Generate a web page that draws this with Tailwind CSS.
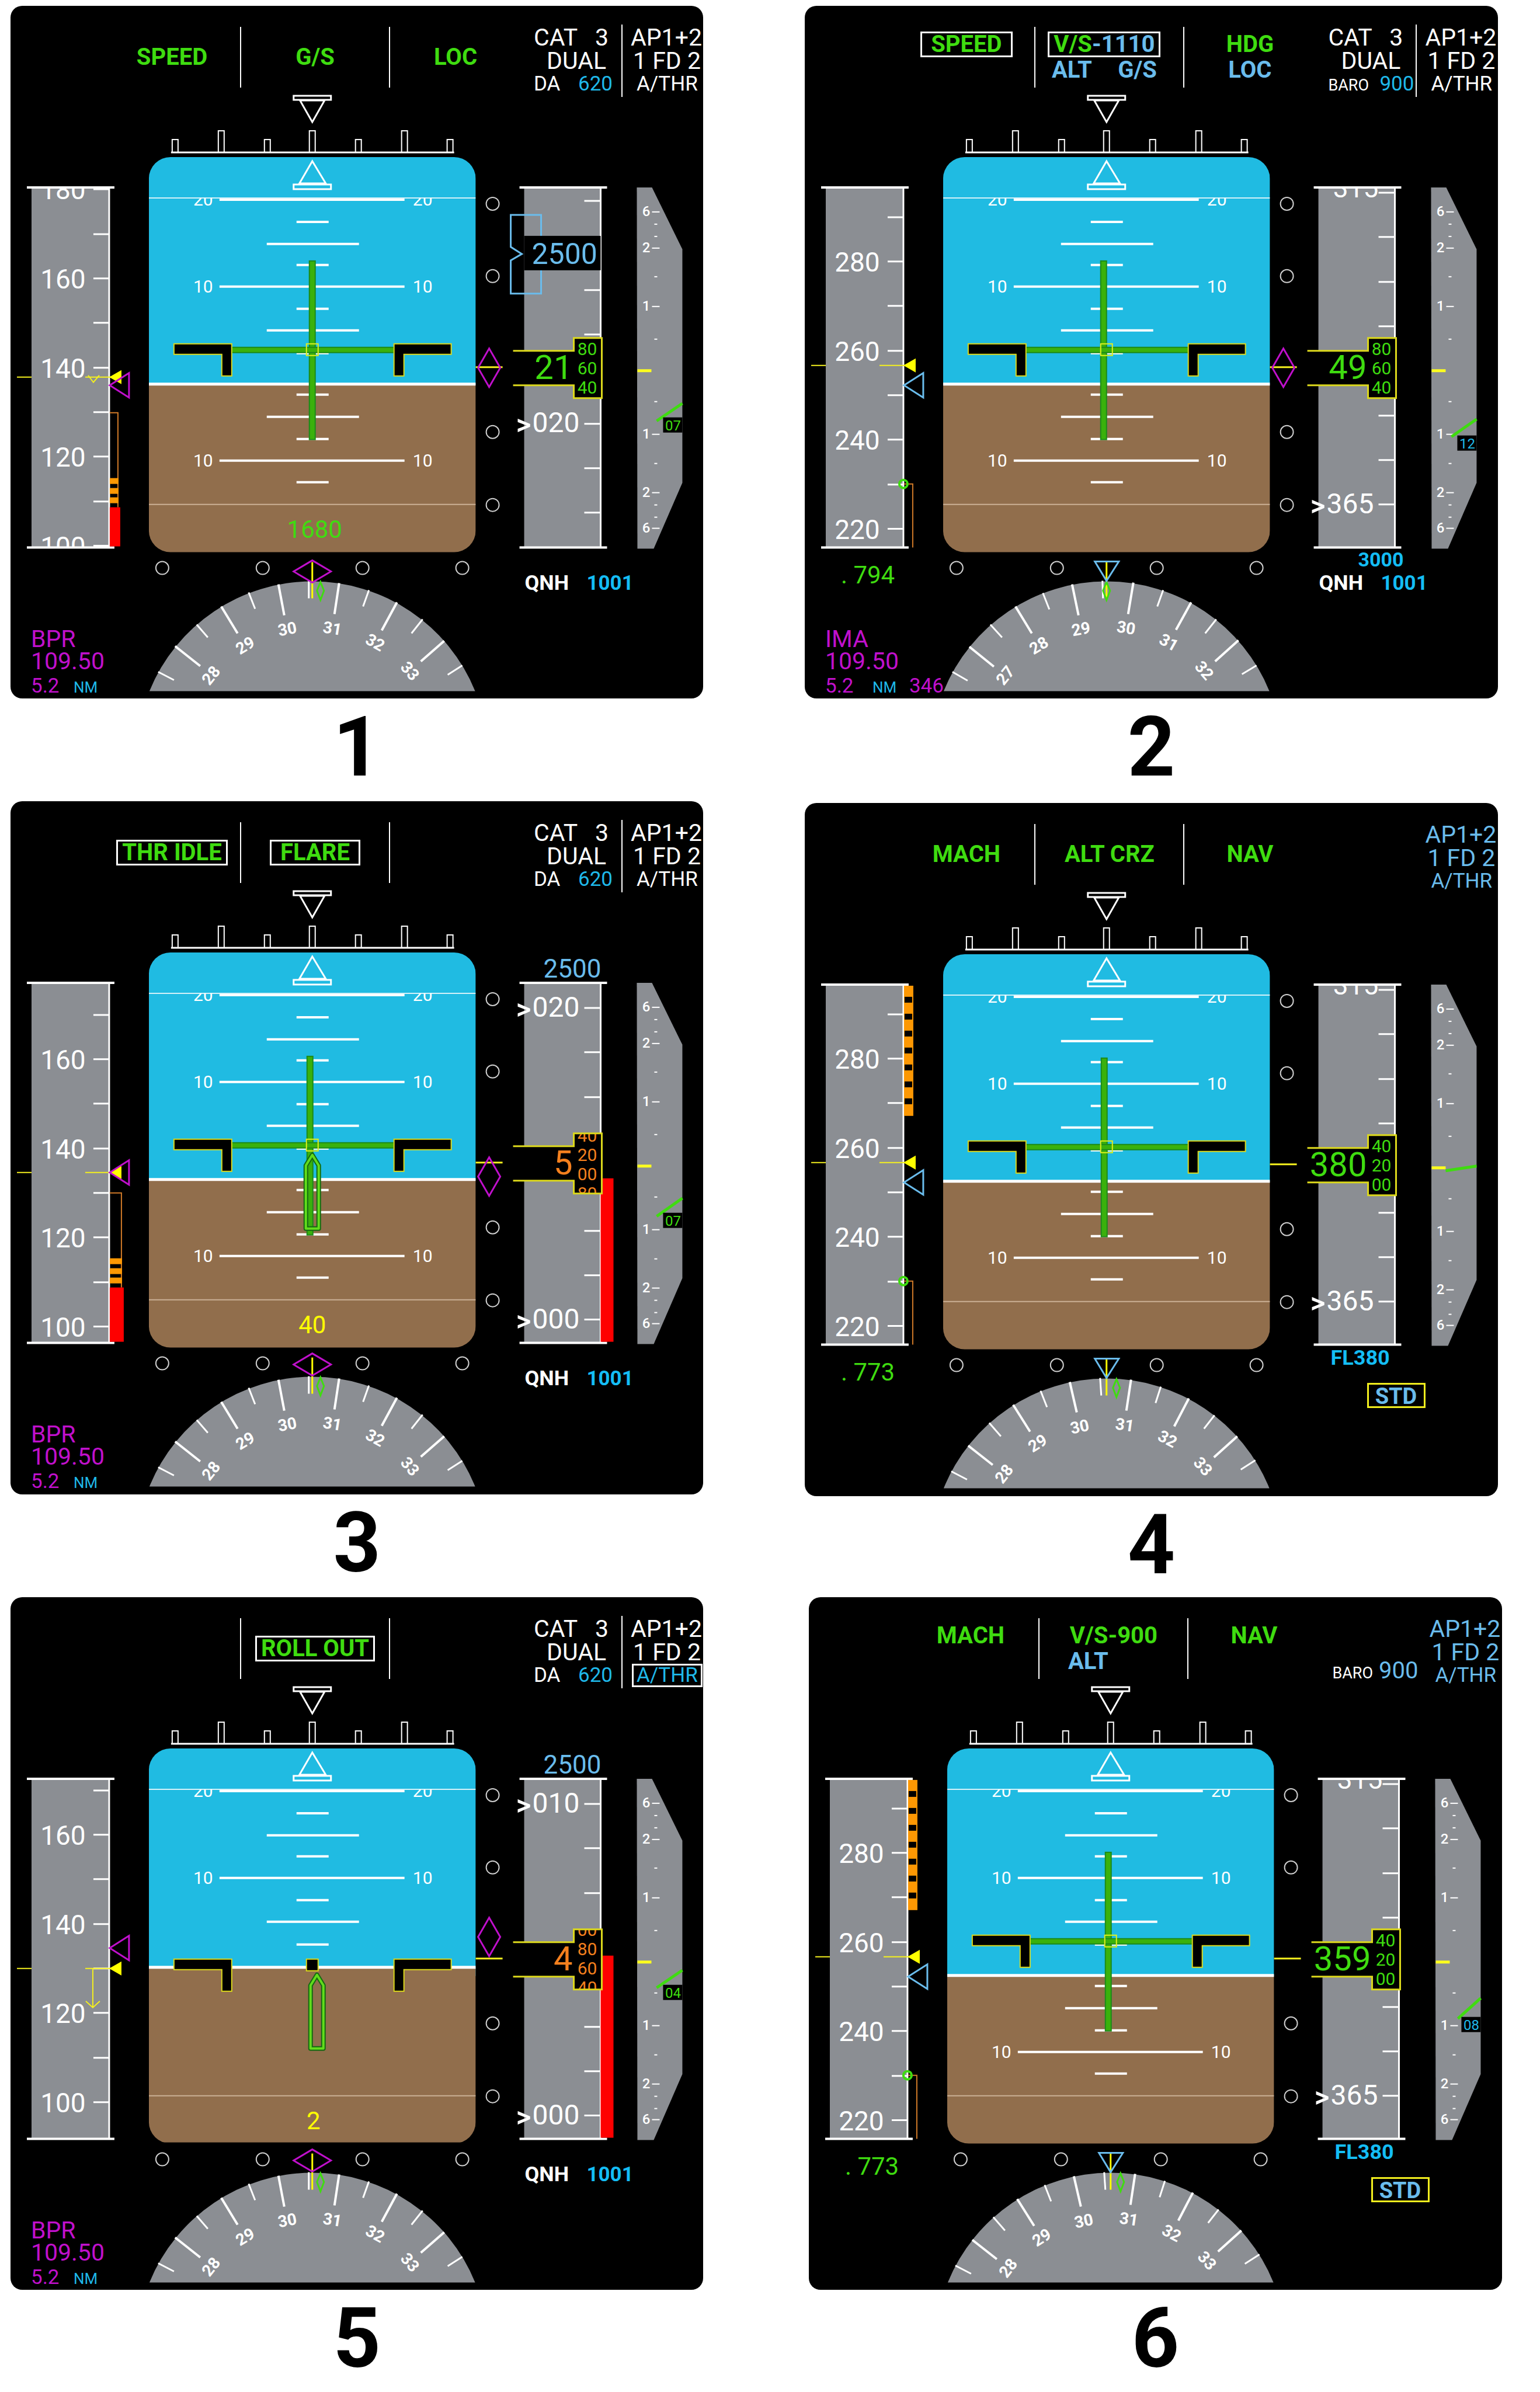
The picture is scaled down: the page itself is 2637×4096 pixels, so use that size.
<!DOCTYPE html>
<html lang="en">
<head>
<meta charset="utf-8">
<title>Primary flight display modes</title>
<script src="https://cdn.jsdelivr.net/npm/@tailwindcss/browser@4"></script>
</head>
<body class="bg-white font-['Roboto',sans-serif] text-black">
<main id="sheet" class="flex flex-col pt-[10px] pl-[18px]"></main>

<script>
// Text colours used by the flight mode annunciator and the readouts
const T = {
  green: 'text-[#3fdc10]', blue: 'text-[#6abcec]', cyan: 'text-[#1fb9ea]', white: 'text-white'
};
const F = {
  green: 'fill-[#3fdc10]', blue: 'fill-[#6abcec]', cyan: 'fill-[#14bdf5]', white: 'fill-white',
  magenta: 'fill-[#c010cc]', orange: 'fill-[#f5801e]', yellow: 'fill-[#ffff00]', sky: 'fill-[#1fb9ea]'
};
const S = {
  magenta: 'fill-none stroke-[#c010cc] stroke-3', blue: 'fill-none stroke-[#6abcec] stroke-3',
  yellow: 'fill-none stroke-[#f4f01e] stroke-2', white: 'fill-none stroke-white stroke-3'
};

const line = (x1, y1, x2, y2, cls) => `<line x1="${x1}" y1="${y1}" x2="${x2}" y2="${y2}" class="${cls}"/>`;
const rect = (x, y, w, h, cls, rx = 0) => `<rect x="${x}" y="${y}" width="${w}" height="${h}" rx="${rx}" class="${cls}"/>`;
const poly = (pts, cls) => `<polygon points="${pts}" class="${cls}"/>`;
const path = (d, cls) => `<path d="${d}" class="${cls}"/>`;
const text = (x, y, s, cls, anchor = 'start') => `<text x="${x}" y="${y}" text-anchor="${anchor}" class="${cls}">${s}</text>`;
const ring = (x, y) => `<circle cx="${x}" cy="${y}" r="11" class="fill-none stroke-[#cfcfcf] stroke-2"/>`;

/* ---------- flight mode annunciator ---------- */
const BOX = { wide: 'outline-3 -outline-offset-3 outline-white px-[18px]', tight: 'outline-3 -outline-offset-3 outline-white px-[10px]' };
const word = ([s, c]) => `<span class="${T[c]}">${s}</span>`;
const modeCell = (rows = [], cls) => `
  <div class="flex h-[104px] flex-col justify-center text-[40px] leading-[44px] font-bold whitespace-pre ${cls}">
    ${rows.map(r => `<div class="flex ${r.spread ? 'w-[180px] justify-between' : ''} ${r.box ? BOX[r.box] : ''}">${r.w.map(word).join('') || '&nbsp;'}</div>`).join('')}
  </div>`;
const header = p => `
  <header class="grid h-[150px] grid-cols-[393px_257px_224px_172px_1fr]">
    ${modeCell(p.fma[0], 'mt-[36px] ml-[160px] items-center')}
    ${modeCell(p.fma[1], 'mt-[36px] border-x-2 border-white items-center' + (p.left ? ' [&>div:last-child]:w-[156px]' : '') + (p.armed ? ' pr-[18px]' : ''))}
    ${modeCell(p.fma[2], 'mt-[36px] items-center')}
    <div class="flex flex-col pt-[34px] pl-[22px] leading-[40px] text-white">
      ${p.cat ? `
      <div class="flex w-[128px] justify-between text-[41px]"><span>CAT</span><span>3</span></div>
      <div class="w-[124px] text-right text-[41px]">DUAL</div>` : '<div class="h-[72px]"></div>'}
      <div class="flex items-baseline justify-between whitespace-nowrap ${p.min[3]}"><span class="${p.min[2]}">${p.min[0]}</span>${p.cat ? `<span class="text-[35px] ${T.cyan}">${p.min[1]}</span>` : `<span class="text-[40px] ${T.blue}">${p.min[1]}</span>`}</div>
    </div>
    <div class="mt-8 h-[124px] pt-[2px] pl-[14px] text-[41px] leading-[40px] whitespace-nowrap ${p.cat ? 'border-l-2 border-white text-white' : 'border-l-2 border-transparent text-[#6abcec]'}">
      <div>AP1+2</div>
      <div class="pl-1">1 FD 2</div>
      <div class="pl-[10px] text-[35px]"><span class="${p.athr ? 'inline-block h-[40px] px-2 -ml-2 leading-[40px] outline-3 -outline-offset-3 outline-white ' + T.cyan : ''}">A/THR</span></div>
    </div>
  </header>`;

/* ---------- attitude indicator ---------- */
const hold = 'fill-black stroke-white stroke-2';
const frame = () => {
  let o = rect(485, 154, 64, 7, S.white) + poly('496,162 538,162 517,199', S.white);
  [282, 440, 596, 753].forEach(x => o += rect(x - 5, 229, 10, 22, hold));
  [361, 517, 675].forEach(x => o += rect(x - 5, 214, 10, 37, hold));
  return o + line(275, 251, 760, 251, 'stroke-white stroke-3');
};
const attitude = (p, id) => {
  const hz = p.horizon || 648;
  let o = `<clipPath id="ball${id}"><rect x="237" y="259" width="560" height="677" rx="37"/></clipPath>
    <clipPath id="pitch${id}"><rect x="237" y="329" width="560" height="525"/></clipPath><g clip-path="url(#ball${id})">`;
  o += rect(237, 259, 560, 390, 'fill-[#20bbe2]') + rect(237, hz, 560, 300, 'fill-[#916e4c]');
  o += line(237, hz, 797, hz, 'stroke-white stroke-5');
  o += line(237, 329, 797, 329, 'stroke-white/80 stroke-2') + line(237, 854, 797, 854, 'stroke-[#cbb095] stroke-2') + '</g>';
  o += poly('517,266 495,304 540,304', S.white) + rect(485, 306, 64, 8, S.white);
  const w = 'stroke-white stroke-4', num = 'fill-white text-[30px]';
  const small = [370, 444, 519, 595], mid = [408, 556], wide = [332, 481];
  if (!p.horizon) { small.push(666, 742, 816); mid.push(704); wide.push(779); }
  o += `<g clip-path="url(#pitch${id})">`;
  small.forEach(y => o += line(490, y, 545, y, w));
  mid.forEach(y => o += line(439, y, 597, y, w));
  wide.forEach(y => {
    const n = y === 332 ? 20 : 10;
    o += line(358, y, 675, y, w) + text(330, y + 10, n, num, 'middle') + text(706, y + 10, n, num, 'middle');
  });
  o += '</g>';
  const d = p.horizon ? 41 : 0;
  if (p.fd) {
    const bar = 'fill-[#3ab10c] stroke-[#1c8a1a] stroke-2';
    o += rect(p.fd - 5, 437, 10, 306, bar) + rect(379, 585, 278, 9, bar);
  }
  const wing = 'fill-black stroke-[#dbd81c] stroke-2';
  o += poly(`280,${579 + d} 379,${579 + d} 379,${634 + d} 362,${634 + d} 362,${597 + d} 280,${597 + d}`, wing);
  o += poly(`657,${579 + d} 755,${579 + d} 755,${597 + d} 674,${597 + d} 674,${634 + d} 657,${634 + d}`, wing);
  o += rect(507, 579 + d, 20, 20, d ? wing : 'fill-none stroke-[#e0f01c] stroke-2');
  if (p.yaw) {
    const [x, y] = p.yaw;
    const d1 = `M${x} ${y + 5} l11 18 v108 h-22 v-108 z`;
    o += path(d1, 'fill-none stroke-[#146a10] stroke-8 [stroke-linejoin:round]') + path(d1, 'fill-none stroke-[#62dc1c] stroke-4 [stroke-linejoin:round]');
  }
  if (p.ra) o += text(p.ra[2] || 519, 911, p.ra[0], 'text-[42px] ' + F[p.ra[1]], 'middle');
  [339, 463, 730, 855].forEach(y => o += ring(826, y));
  [260, 432, 603, 774].forEach(x => o += ring(x, 963));
  o += line(797, 619, 843, 619, 'stroke-[#f4f01e] stroke-3');
  if (p.gs) o += poly(`820,${p.gs - 33} 839,${p.gs} 820,${p.gs + 33} 801,${p.gs}`, S.magenta);
  return o;
};

/* ---------- speed tape ---------- */
const speed = (p, id) => {
  const s = p.spd;
  let o = `<clipPath id="spd${id}"><rect x="28" y="312" width="145" height="615"/></clipPath>`;
  o += rect(36, 312, 132, 615, 'fill-[#8b8e93]') + `<g clip-path="url(#spd${id})">`;
  for (let i = -2; i < 9; i++) {
    const y = Math.round(s.y + i * 76.3);
    if (y < 312 || y > 927) continue;
    o += line(142, y, 169, y, 'stroke-white stroke-3');
    if (i % 2 === 0) o += text(90, y + 17, s.top - i * 10, 'fill-white text-[46px]', 'middle');
  }
  o += '</g>' + line(169, 312, 169, 927, 'stroke-white stroke-3');
  o += line(28, 311, 178, 311, 'stroke-white stroke-4') + line(28, 928, 178, 928, 'stroke-white stroke-4');
  const amber = 'fill-none stroke-[#d07a28] stroke-2', blk = 'fill-[#fd9803]';
  if (s.vls) {
    const v = s.vls, r = s.stripe;
    o += path(`M170 ${v} H${r - 1} V${v + 162}`, amber);
    [112, 129, 145].forEach(k => o += rect(170, v + k, r - 170, 10, blk));
    o += rect(170, v + 162, r - 167, 926 - v - 162, 'fill-[#fe0000]');
  }
  if (s.barber) {
    o += rect(170, 313, 16, 223, blk);
    for (let i = 0; i < 7; i++) o += rect(171, 332 + i * 29, 13, 10, 'fill-black');
  }
  if (s.dot) {
    o += path('M170 819 H185 V928', amber) + '<circle cx="169" cy="819" r="7" class="fill-none stroke-[#3fdc10] stroke-4"/>';
  }
  const a = s.now;
  o += line(11, a, 36, a, S.yellow) + line(128, a, 172, a, S.yellow) + poly(`169,${a} 190,${a - 12} 190,${a + 12}`, 'fill-[#ffff00]');
  if (s.trend === 'short') o += path(`M133 ${a - 3} L142 ${a + 9} L152 ${a - 3}`, S.yellow);
  if (s.trend === 'long') o += path(`M141 ${a} V${a + 66} M129 ${a + 56} L141 ${a + 67} L153 ${a + 56}`, S.yellow);
  o += poly(`170,${s.tgt} 203,${s.tgt - 21} 203,${s.tgt + 21}`, S[s.tgtc]);
  if (p.mach) o += text(62, 989, '. ' + p.mach, 'text-[42px] ' + F.green);
  return o;
};

/* ---------- altitude tape ---------- */
const altitude = (p, id) => {
  const a = p.alt, y6 = 'fill-none stroke-[#dcd81c] stroke-3';
  let o = `<clipPath id="alt${id}"><rect x="860" y="313" width="160" height="613"/></clipPath>
    <clipPath id="drum${id}"><rect x="965" y="569" width="47" height="103"/></clipPath>`;
  o += rect(880, 312, 130, 615, 'fill-[#8b8e93]') + `<g clip-path="url(#alt${id})">`;
  for (let i = 0; i < 8; i++) {
    const y = Math.round(a.y + i * 76.3);
    o += line(983, y, 1010, y, 'stroke-white stroke-3');
  }
  a.labels.forEach(([s, y]) => o += text(894, y + 15, s, 'fill-white text-[48px]') + text(866, y + 19, '&gt;', 'fill-white font-medium text-[50px]'));
  if (a.cut) o += text(944, 328, a.cut, 'fill-white text-[46px]', 'middle');
  o += '</g>' + line(1011, 312, 1011, 927, 'stroke-white stroke-3');
  o += line(872, 311, 1022, 311, 'stroke-white stroke-4') + line(872, 928, 1022, 928, 'stroke-white stroke-4');
  if (a.red) o += rect(1011, a.red, 22, 926 - a.red, 'fill-[#fe0000]');
  if (a.bracket) {
    o += path('M909 358 H857 V413 L876 425 L857 436 V493 H909 Z', S.blue);
    o += rect(880, 394, 131, 59, 'fill-black') + text(893, 442, '2500', 'text-[50px] ' + F.blue);
  }
  if (a.sel) o += text(1012, 302, a.sel, 'text-[44px] ' + F.blue, 'end');
  o += rect(860, 591, 106, 59, 'fill-black') + rect(965, 569, 47, 103, 'fill-black');
  o += text(963, 639, a.big, 'text-[58px] ' + F[a.c], 'end') + `<g clip-path="url(#drum${id})">`;
  a.drum.forEach((s, i) => o += text(988, a.dy + i * 33, s, 'text-[30px] ' + F[a.c], 'middle'));
  o += '</g>' + path('M861 591 H965 V569 H1013 V672 H965 V650 H861', y6);
  if (a.under) o += text(a.under[1], a.under[2], a.under[0], 'font-bold ' + a.under[3] + ' ' + F.cyan);
  if (p.std) o += rect(965, 995, 97, 40, 'fill-none stroke-[#f4f01e] stroke-3') + text(1013, 1029, 'STD', 'font-bold text-[38px] ' + F.blue, 'middle');
  else o += text(881, 1000, 'QNH', 'fill-white font-bold text-[36px]') + text(987, 1000, '1001', 'font-bold text-[35px] ' + F.cyan);
  return o;
};

/* ---------- vertical speed scale ---------- */
const vspeed = p => {
  let o = poly('1073,311 1099,311 1151,417 1151,817 1102,930 1074,930', 'fill-[#8b8e93]');
  [[353, 6], [415, 2], [515, 1], [734, 1], [834, 2], [895, 6]].forEach(([y, n]) =>
    o += line(1099, y, 1112, y, 'stroke-white stroke-2') + text(1089, y + 7, n, 'fill-white font-medium text-[24px]', 'middle'));
  [374, 395, 464, 571, 678, 784, 855, 876].forEach(y => o += line(1103, y, 1108, y, 'stroke-white stroke-2'));
  o += line(1074, 625, 1098, 625, 'stroke-[#ffff1e] stroke-5');
  const [x1, y1, y2] = p.vs.needle;
  o += line(x1, y1, 1151, y2, 'stroke-[#3fdc10] stroke-5');
  if (p.vs.n) o += rect(1118, p.vs.y, 33, 26, 'fill-black') + text(1135, p.vs.y + 22, p.vs.n, 'text-[24px] ' + F[p.vs.c], 'middle');
  return o;
};

/* ---------- heading arc ---------- */
const heading = p => {
  let o = path('M238 1174 A301 301 0 0 1 796 1174 Z', 'fill-[#8b8e93]');
  const cx = 517, cy = 1286, R = 301;
  const at = (deg, r) => {
    const t = deg * Math.PI / 180;
    return [Math.round(cx + r * Math.sin(t)), Math.round(cy - r * Math.cos(t))];
  };
  const [first, a0] = p.hdg;
  for (let i = -5; i <= 7; i++) {
    const deg = a0 + i * 10, big = i % 2 === 0;
    if (Math.abs(deg) > 63) continue;
    const [x1, y1] = at(deg, R), [x2, y2] = at(deg, big ? 247 : 271);
    o += line(x1, y1, x2, y2, big ? 'stroke-white stroke-4' : 'stroke-white stroke-3');
    if (big) {
      const [tx, ty] = at(deg, 213);
      o += `<text x="${tx}" y="${ty}" text-anchor="middle" transform="rotate(${Math.round(deg)} ${tx} ${ty})" class="fill-white font-bold text-[28px]">${first + i / 2}</text>`;
    }
  }
  o += line(517, 953, 517, 1015, 'stroke-[#ffff00] stroke-3');
  o += poly(`${p.trk},987 ${p.trk + 6},1002 ${p.trk},1018 ${p.trk - 6},1002`, 'fill-none stroke-[#3fdc10] stroke-3');
  if (p.loc) o += poly(`485,${p.loc} 517,${p.loc - 19} 549,${p.loc} 517,${p.loc + 19}`, S.magenta);
  else o += poly('497,952 538,952 517,985', S.blue);
  if (p.ils) {
    o += text(35, 1098, p.ils, 'text-[41px] ' + F.magenta) + text(35, 1137, '109.50', 'text-[41px] ' + F.magenta);
    o += text(35, 1177, '5.2', 'text-[35px] ' + F.magenta) + text(p.crs ? 116 : 108, 1177, 'NM', 'text-[26px] ' + F.sky);
    if (p.crs) o += text(179, 1177, p.crs, 'text-[35px] ' + F.magenta);
  }
  return o;
};

const G = s => [s, 'green'], B = s => [s, 'blue'];
const DA = ['DA', '620', 'text-[35px]', 'w-[135px]'];
const cruiseSpd = extra => Object.assign({ y: 438, top: 280, now: 616, tgt: 650, tgtc: 'blue', dot: true }, extra);
const panels = [
  { fma: [[{ w: [G('SPEED')] }], [{ w: [G('G/S')] }], [{ w: [G('LOC')] }]], cat: true, min: DA,
    fd: 517, ra: ['1680', 'green', 521], gs: 620,
    spd: { y: 467, top: 160, now: 636, tgt: 650, tgtc: 'magenta', vls: 697, stripe: 185, trend: 'short' },
    alt: { y: 334, labels: [['020', 715]], bracket: true, big: '21', c: 'green', drum: ['80', '60', '40'], dy: 598 },
    vs: { needle: [1107, 711, 681], n: '07', y: 705, c: 'green' }, hdg: [30, -11.2], trk: 531, loc: 969, ils: 'BPR' },
  { fma: [[{ w: [G('SPEED')], box: 'wide' }, { w: [] }], [{ w: [G('V/S'), B('-1110')], box: 'tight' }, { w: [B('ALT'), B('G/S')], spread: true }], [{ w: [G('HDG')] }, { w: [B('LOC')] }]],
    cat: true, armed: true, min: ['BARO', '900', 'text-[27px]', 'w-[147px]'],
    fd: 512, gs: 620, spd: cruiseSpd(), mach: '794',
    alt: { y: 320, labels: [['365', 854]], cut: '315', big: '49', c: 'green', drum: ['80', '60', '40'], dy: 598, under: ['3000', 948, 960, 'text-[34px]'] },
    vs: { needle: [1108, 738, 708], n: '12', y: 736, c: 'sky' }, hdg: [29, -11.3], trk: 517, ils: 'IMA', crs: '346' },
  { fma: [[{ w: [G('THR IDLE')], box: 'tight' }], [{ w: [G('FLARE')], box: 'wide' }], []], cat: true, min: DA,
    fd: 513, yaw: [517, 601], ra: ['40', 'yellow', 517], gs: 643,
    spd: { y: 442, top: 160, now: 636, tgt: 636, tgtc: 'magenta', vls: 671, stripe: 191 },
    alt: { y: 354, labels: [['020', 354], ['000', 888]], sel: '2500', red: 646, big: '5', c: 'orange', drum: ['40', '20', '00', '80'], dy: 583 },
    vs: { needle: [1107, 711, 680], n: '07', y: 705, c: 'green' }, hdg: [30, -11.2], trk: 531, loc: 965, ils: 'BPR' },
  { fma: [[{ w: [G('MACH')] }], [{ w: [G('ALT CRZ')] }], [{ w: [G('NAV')] }]], drop: true, min: ['', '', '', ''],
    fd: 513, spd: cruiseSpd({ barber: true }), mach: '773',
    alt: { y: 320, labels: [['365', 854]], cut: '315', big: '380', c: 'green', drum: ['40', '20', '00'], dy: 598, under: ['FL380', 901, 962, 'text-[36px]'] }, std: true,
    vs: { needle: [1098, 630, 622] }, hdg: [30, -12], trk: 534 },
  { fma: [[], [{ w: [G('ROLL OUT')], box: 'tight' }], []], cat: true, min: DA, athr: true,
    horizon: 634, yaw: [525, 642], ra: ['2', 'yellow', 519], gs: 582,
    spd: { y: 407, top: 160, now: 636, tgt: 601, tgtc: 'magenta', trend: 'long' },
    alt: { y: 354, labels: [['010', 354], ['000', 888]], sel: '2500', red: 614, big: '4', c: 'orange', drum: ['00', '80', '60', '40'], dy: 580 },
    vs: { needle: [1107, 669, 639], n: '04', y: 664, c: 'green' }, hdg: [30, -11.2], trk: 531, loc: 965, ils: 'BPR' },
  { fma: [[{ w: [G('MACH')] }, { w: [] }], [{ w: [G('V/S-900')] }, { w: [B('ALT')] }], [{ w: [G('NAV')] }, { w: [] }]], left: true,
    min: ['BARO', '900', 'text-[27px]', 'w-[147px]'],
    fd: 513, spd: cruiseSpd({ barber: true }), mach: '773',
    alt: { y: 320, labels: [['365', 854]], cut: '315', big: '359', c: 'green', drum: ['40', '20', '00'], dy: 598, under: ['FL380', 901, 962, 'text-[36px]'] }, std: true,
    vs: { needle: [1112, 722, 687], n: '08', y: 719, c: 'sky' }, hdg: [30, -12], trk: 534 }
];

const figure = (p, i) => `
  <figure class="w-[45.3%] ${p.drop ? 'pt-[3px]' : ''}">
    <div class="rounded-[20px] bg-black">
      ${header(p)}
      <svg viewBox="0 150 1187 1037" class="block w-full" role="img" aria-label="Flight display ${i + 1}">
        ${frame()}${attitude(p, i)}${speed(p, i)}${altitude(p, i)}${vspeed(p)}${heading(p)}
      </svg>
    </div>
    <figcaption class="${p.drop ? 'pb-[6px]' : 'pb-[9px]'} text-center text-[142px] leading-[167px] font-bold">${i + 1}</figcaption>
  </figure>`;

const rowGap = ['gap-[174px]', 'gap-[174px]', 'gap-[181px]'];
document.getElementById('sheet').innerHTML = [0, 1, 2].map(r =>
  `<section class="flex items-start ${rowGap[r]}">${figure(panels[2 * r], 2 * r)}${figure(panels[2 * r + 1], 2 * r + 1)}</section>`).join('');
</script>
</body>
</html>
